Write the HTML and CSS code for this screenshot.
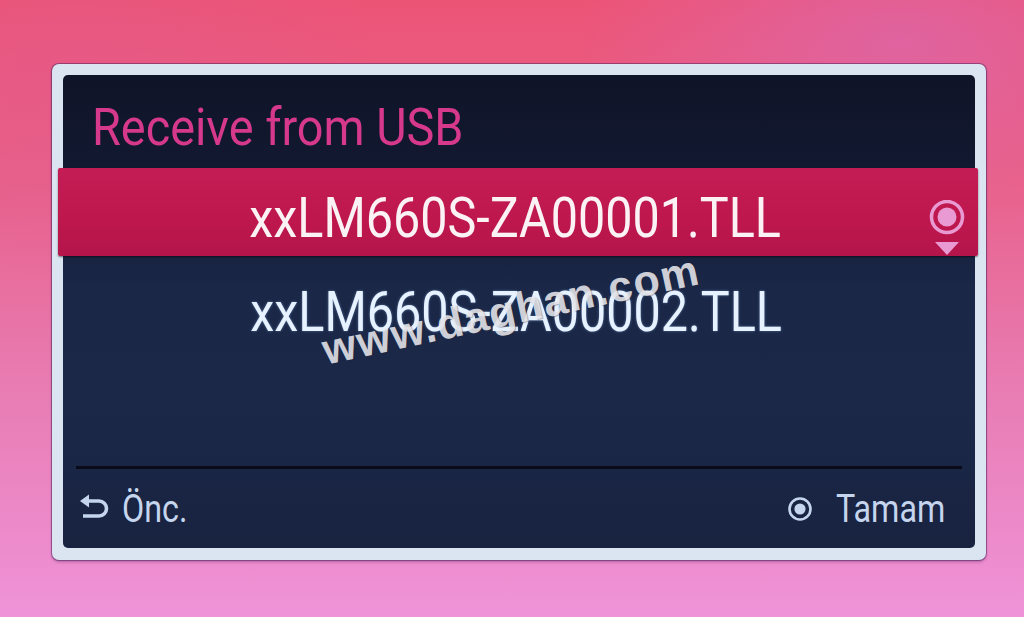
FILE: index.html
```html
<!DOCTYPE html>
<html>
<head>
<meta charset="utf-8">
<link rel="stylesheet" href="styles.css">
</head>
<body>
<div class="screen">
  <div class="frame">
    <div class="panel">
      <div class="title"><span class="cond title-text">Receive from USB</span></div>
      <div class="list">
        <div class="row selected">
          <span class="fname cond">xxLM660S-ZA00001.TLL</span>
          <svg class="sel-icon" width="36" height="56" viewBox="0 0 36 56">
            <circle cx="18" cy="17" r="15.5" fill="none" stroke="#e99ad2" stroke-width="3.5"/>
            <circle cx="18" cy="17" r="9.5" fill="#e99ad2"/>
            <polygon points="6,42 30,42 18,55" fill="#e99ad2"/>
          </svg>
        </div>
        <div class="row">
          <span class="fname cond">xxLM660S-ZA00002.TLL</span>
        </div>
      </div>
      <div class="divider"></div>
      <div class="footer">
        <div class="btn">
          <svg class="back-icon" width="30" height="30" viewBox="0 0 30 30">
            <path d="M7 8 H19 A7.5 7.5 0 0 1 19 23 H3" fill="none" stroke="#c5d5ee" stroke-width="3.6"/>
            <polygon points="0,8 9,1.5 9,14.5" fill="#c5d5ee"/>
          </svg>
          <span class="label cond back-label">Önc.</span>
        </div>
        <div class="btn">
          <svg class="ok-icon" width="26" height="26" viewBox="0 0 26 26">
            <circle cx="13" cy="13" r="10.5" fill="none" stroke="#c5d5ee" stroke-width="2.6"/>
            <circle cx="13" cy="13" r="5.6" fill="#c5d5ee"/>
          </svg>
          <span class="label cond ok-label">Tamam</span>
        </div>
      </div>
    </div>
  </div>
  <div class="watermark">www.daghan.com</div>
</div>
</body>
</html>
```
FILE: styles.css
```css
html, body {
  margin: 0;
  padding: 0;
}
body {
  width: 1024px;
  height: 617px;
  overflow: hidden;
  font-family: Roboto, "Liberation Sans", sans-serif;
}
.screen {
  position: relative;
  width: 1024px;
  height: 617px;
  padding-top: 64px;
  padding-left: 52px;
  box-sizing: border-box;
  background:
    radial-gradient(ellipse 320px 160px at 900px 40px, rgba(214, 110, 190, 0.55), rgba(214, 110, 190, 0) 100%),
    radial-gradient(ellipse 300px 200px at 80px 80px, rgba(226, 90, 140, 0.5), rgba(226, 90, 140, 0) 100%),
    linear-gradient(180deg, #ec5476 0%, #e8628c 30%, #e87ab0 60%, #ef93d8 100%);
}
.frame {
  width: 934px;
  height: 496px;
  box-sizing: border-box;
  padding: 11px 11px 12px 11px;
  background: #dbe5f1;
  border-radius: 7px;
  box-shadow: 0 0 0 1px rgba(90, 40, 100, 0.55), 0 2px 3px rgba(60, 20, 80, 0.35);
}
.panel {
  height: 100%;
  border-radius: 5px;
  background: linear-gradient(180deg, #0f1428 0%, #12182f 18%, #1a2747 45%, #1b2848 70%, #182340 100%);
  display: flex;
  flex-direction: column;
}
.cond {
  display: inline-block;
  white-space: nowrap;
}
.title {
  height: 93px;
  box-sizing: border-box;
  padding: 25px 0 0 29px;
  font-size: 52px;
  line-height: 56px;
  color: #d6398b;
}
.title-text {
  transform: scaleX(0.9);
  transform-origin: left center;
}
.list {
  display: flex;
  flex-direction: column;
}
.row {
  position: relative;
  height: 88px;
  display: flex;
  justify-content: center;
  align-items: flex-start;
  box-sizing: border-box;
  padding-top: 26px;
}
.row .fname {
  font-size: 56px;
  line-height: 60px;
  color: #e6f2ff;
  text-shadow: 0 0 3px rgba(160, 200, 255, 0.45);
  transform: scaleX(0.866);
  transform-origin: center;
  margin-right: 6px;
}
.row.selected {
  margin: 0 -3px 0 -5px;
  padding-top: 20px;
  background: linear-gradient(180deg, #c41c54 0%, #be174e 60%, #b3154a 100%);
  border-radius: 2px;
  box-shadow: 0 1px 2px rgba(0, 0, 0, 0.5);
}
.row.selected .fname {
  color: #fbf2f6;
  text-shadow: none;
}
.sel-icon {
  position: absolute;
  right: 13px;
  top: 32px;
}
.divider {
  margin: auto 13px 0 13px;
  height: 3px;
  background: #090c18;
}
.footer {
  height: 79px;
  display: flex;
  justify-content: space-between;
  align-items: flex-start;
  padding: 0 30px 0 17px;
}
.btn {
  display: flex;
  align-items: center;
  padding-top: 21px;
  font-size: 38px;
  line-height: 38px;
  color: #c5d5ee;
}
.label {
  transform: scaleX(0.85);
  transform-origin: left center;
}
.back-label {
  width: 65px;
  margin-left: 12px;
}
.ok-label {
  width: 109px;
  margin-left: 23px;
}
.back-icon {
  margin-top: -3px;
}
.watermark {
  position: absolute;
  left: 511px;
  top: 310px;
  transform: translate(-50%, -50%) rotate(-12.2deg);
  font-family: "Liberation Sans", Arial, sans-serif;
  font-weight: bold;
  font-size: 43px;
  letter-spacing: 1.5px;
  white-space: nowrap;
  color: rgba(238, 238, 242, 0.86);
  text-shadow: 1px 1px 1px rgba(40, 40, 60, 0.35);
}
```
